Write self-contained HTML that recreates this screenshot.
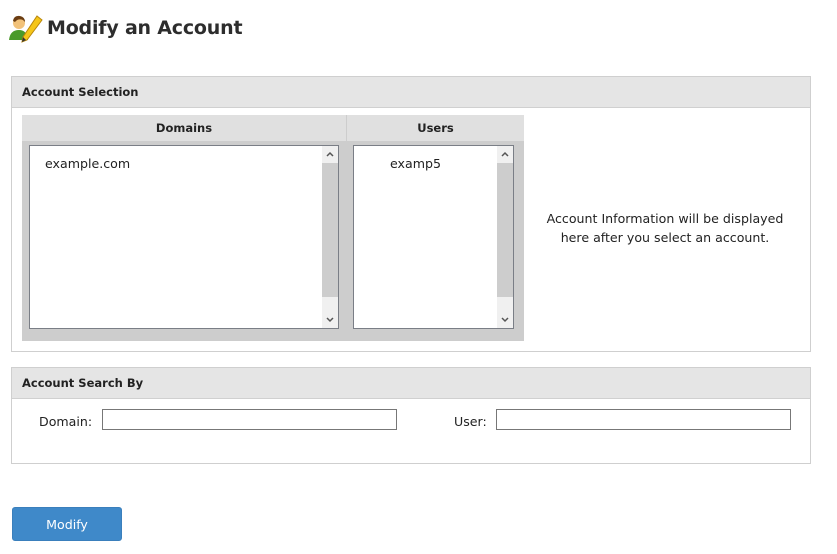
<!DOCTYPE html>
<html><head><meta charset="utf-8"><style>
*{box-sizing:border-box;margin:0;padding:0}
body{width:837px;height:554px;background:#fff;font-family:"DejaVu Sans","Liberation Sans",sans-serif;font-size:11px;color:#222;position:relative;overflow:hidden}
.a{position:absolute}
.panel{position:absolute;left:11px;width:800px;border:1px solid #cfcfcf;background:#fff}
.ph{height:31px;background:#e5e5e5;border-bottom:1px solid #d0d0d0;font-weight:bold;font-size:11.5px;line-height:31px;padding-left:10px;color:#222}
.lb{position:absolute;background:#fff;border:1px solid #7a7e86}
.sb{position:absolute;right:0;top:0;bottom:0;width:16px;background:#f0f0f0}
.th{position:absolute;left:0;right:0;top:17px;height:134px;background:#cdcdcd}
.arr{position:absolute;left:4px}
input{position:absolute;height:21px;border:1px solid #777;background:#fff}
</style></head><body>
<svg class="a" style="left:7px;top:12px" width="36" height="32" viewBox="0 0 36 32">
<circle cx="12" cy="11" r="6" fill="#f2c27a"/>
<path d="M6 9 Q7 3 13 4 Q18 5 18 10 L16 8 Q11 6 8 10Z" fill="#6b3d12"/>
<path d="M2 28 Q3 18 12 18 Q20 18 21 28Z" fill="#4a9a2a"/>
<path d="M30 4 L35 8 L20 28 L15 30 L16 25Z" fill="#f5c518" stroke="#b8860b" stroke-width="1"/>
<path d="M15 30 L16 25 L19 28Z" fill="#333"/>
</svg>
<div class="a" style="left:47px;top:17px;font-size:19px;font-weight:bold;color:#2d2d2d;letter-spacing:-0.2px">Modify an Account</div>

<div class="panel" style="top:76px;height:276px">
<div class="ph">Account Selection</div>
</div>
<div class="a" style="left:22px;top:115px;width:502px;height:226px;background:#cdcdcd"></div>
<div class="a" style="left:22px;top:115px;width:324px;height:26px;background:#e0e0e0;font-weight:bold;font-size:11.5px;text-align:center;line-height:26px">Domains</div>
<div class="a" style="left:347px;top:115px;width:177px;height:26px;background:#e0e0e0;font-weight:bold;font-size:11.5px;text-align:center;line-height:26px">Users</div>
<div class="lb" style="left:29px;top:145px;width:310px;height:184px">
<div class="a" style="left:15px;top:10px;font-size:12.6px">example.com</div>
<div class="sb"><div class="th"></div>
<svg class="arr" style="top:5px" width="8" height="6"><path d="M1 5 L4 2 L7 5" stroke="#555" stroke-width="1.5" fill="none"/></svg>
<svg class="arr" style="bottom:5px" width="8" height="6"><path d="M1 1 L4 4 L7 1" stroke="#555" stroke-width="1.5" fill="none"/></svg></div>
</div>
<div class="lb" style="left:353px;top:145px;width:161px;height:184px">
<div class="a" style="left:36px;top:10px;font-size:12.6px">examp5</div>
<div class="sb"><div class="th"></div>
<svg class="arr" style="top:5px" width="8" height="6"><path d="M1 5 L4 2 L7 5" stroke="#555" stroke-width="1.5" fill="none"/></svg>
<svg class="arr" style="bottom:5px" width="8" height="6"><path d="M1 1 L4 4 L7 1" stroke="#555" stroke-width="1.5" fill="none"/></svg></div>
</div>
<div class="a" style="left:520px;top:209px;width:290px;text-align:center;line-height:19px;font-size:12.6px">Account Information will be displayed<br>here after you select an account.</div>

<div class="panel" style="top:367px;height:97px">
<div class="ph">Account Search By</div>
</div>
<div class="a" style="left:39px;top:414px;font-size:12.6px">Domain:</div>
<input style="left:102px;top:409px;width:295px">
<div class="a" style="left:454px;top:414px;font-size:12.6px">User:</div>
<input style="left:496px;top:409px;width:295px">

<div class="a" style="left:12px;top:507px;width:110px;height:34px;background:#3f89c9;border:1px solid #3a7fbc;border-radius:3px;color:#fff;text-align:center;line-height:33px;font-size:12.6px">Modify</div>
</body></html>
